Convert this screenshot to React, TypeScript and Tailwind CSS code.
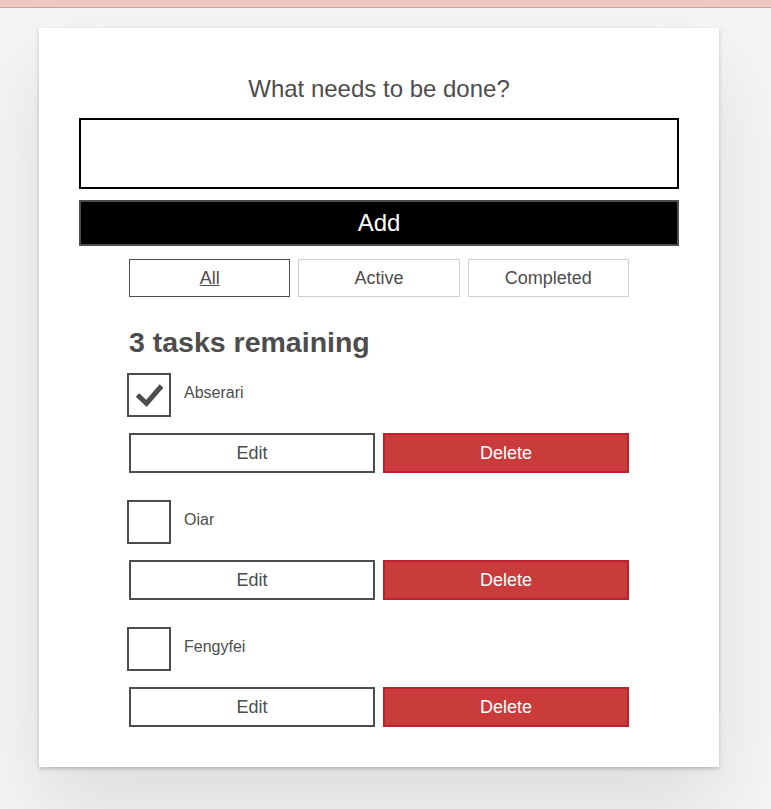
import React from "react";

const tasks = [
  { id: "t1", name: "Abserari", done: true },
  { id: "t2", name: "Oiar", done: false },
  { id: "t3", name: "Fengyfei", done: false },
];

function Check() {
  return (
    <svg width="40" height="40" viewBox="0 0 40 40">
      <polyline
        points="8.5,20 17.5,28.5 32.5,11"
        fill="none"
        stroke="#4d4d4d"
        strokeWidth="5"
      />
    </svg>
  );
}

export default function App() {
  return (
    <div className="min-h-[809px] bg-[#f5f5f5] text-[#4d4d4d] font-['Liberation_Sans',Arial,sans-serif] pb-16">
      <div className="h-[8px] bg-[#f1c8c0] border-b border-[#c9a6a0]" />
      <div className="w-[680px] ml-[39px] mt-[20px] bg-white px-10 pt-10 pb-10 shadow-[0_2px_4px_0_rgba(0,0,0,0.2),0_40px_80px_0_rgba(0,0,0,0.1)]">
        <form>
          <label className="block text-center text-[24px] leading-[30px] pt-[6px] mb-[14px]">
            What needs to be done?
          </label>
          <input
            type="text"
            className="block w-full h-[71px] border-2 border-black outline-none px-3 text-[24px]"
          />
          <button
            type="button"
            className="mt-[11px] block w-full h-[46px] bg-black border-2 border-[#4d4d4d] text-white text-[24px]"
          >
            Add
          </button>
        </form>

        <div className="w-[500px] mx-auto">
          <div className="mt-[13px] grid grid-cols-3 gap-2">
            <button className="h-[38px] border border-[#4d4d4d] text-[18px] underline bg-white">
              All
            </button>
            <button className="h-[38px] border border-[#d0d0d0] text-[18px] bg-white">
              Active
            </button>
            <button className="h-[38px] border border-[#d0d0d0] text-[18px] bg-white">
              Completed
            </button>
          </div>

          <h2 className="mt-[28px] text-[28.5px] leading-[35px] font-bold">
            3 tasks remaining
          </h2>

          <ul className="mt-[13px] flex flex-col gap-[27px]">
            {tasks.map((t) => (
              <li key={t.id}>
                <div className="flex items-start -ml-[2px]">
                  <div className="w-[44px] h-[44px] border-2 border-[#4d4d4d]">
                    {t.done && <Check />}
                  </div>
                  <span className="ml-[13px] pt-[8px] text-[16px] leading-[24px]">
                    {t.name}
                  </span>
                </div>
                <div className="mt-[16px] grid grid-cols-2 gap-2">
                  <button className="h-[40px] border-2 border-[#4d4d4d] bg-white text-[18px]">
                    Edit
                  </button>
                  <button className="h-[40px] border-2 border-[#bd2130] bg-[#ca3c3c] text-white text-[18px]">
                    Delete
                  </button>
                </div>
              </li>
            ))}
          </ul>
        </div>
      </div>
    </div>
  );
}
